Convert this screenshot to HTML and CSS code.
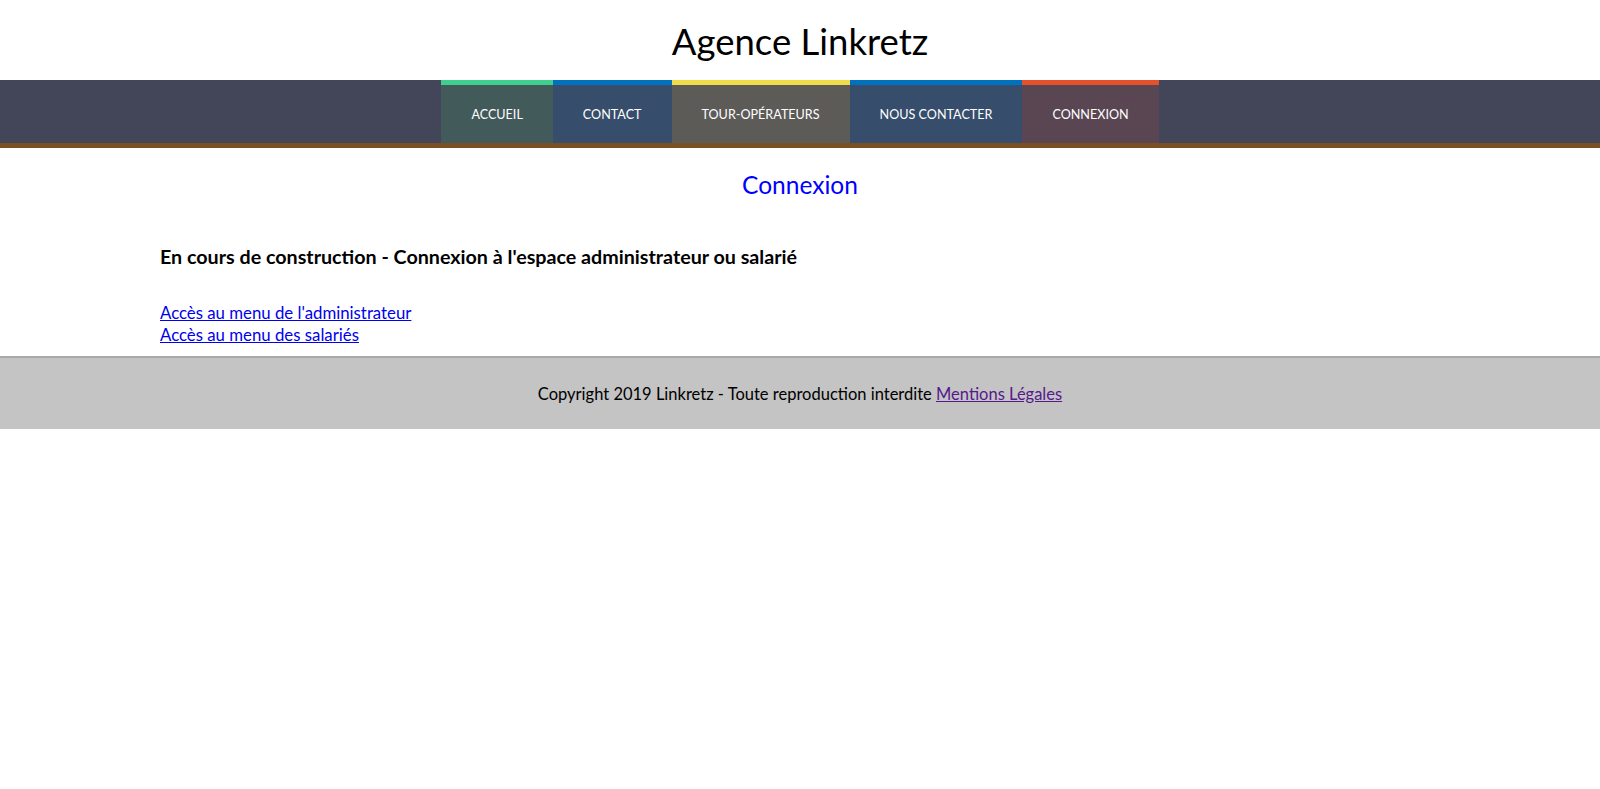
FILE: index.html
```html
<!DOCTYPE html>
<html lang="fr">
<head>
<meta charset="utf-8">
<title>Agence Linkretz - Connexion</title>
<link rel="stylesheet" href="styles.css">
</head>
<body>
<header class="site-header">
  <h1 class="site-title">Agence Linkretz</h1>
</header>
<nav class="main-nav">
  <ul class="nav-list">
    <li class="nav-item nav-accueil"><a href="#">ACCUEIL</a></li>
    <li class="nav-item nav-contact"><a href="#">CONTACT</a></li>
    <li class="nav-item nav-tour"><a href="#">TOUR-OPÉRATEURS</a></li>
    <li class="nav-item nav-nous"><a href="#">NOUS CONTACTER</a></li>
    <li class="nav-item nav-connexion"><a href="#">CONNEXION</a></li>
  </ul>
</nav>
<main class="content">
  <h2 class="page-title">Connexion</h2>
  <section class="section">
    <h3 class="section-title">En cours de construction - Connexion à l'espace administrateur ou salarié</h3>
    <p class="links">
      <a href="#" class="link">Accès au menu de l'administrateur</a><br>
      <a href="#" class="link">Accès au menu des salariés</a>
    </p>
  </section>
</main>
<footer class="site-footer">
  <p class="footer-text">Copyright 2019 Linkretz - Toute reproduction interdite <a href="#" class="visited">Mentions Légales</a></p>
</footer>
</body>
</html>
```

FILE: styles.css
```css
* { box-sizing: border-box; }
body {
  margin: 0;
  font-family: Lato, "Open Sans", sans-serif;
  color: #000;
  background: #fff;
}
.site-header {
  height: 80px;
  display: flex;
  align-items: center;
  justify-content: center;
}
.site-title {
  margin: 0;
  font-weight: 400;
  font-size: 36.5px;
  line-height: 40px;
  padding-top: 1px;
}
.main-nav {
  background: #434559;
  border-bottom: 5px solid #7a4f24;
}
.nav-list {
  list-style: none;
  margin: 0;
  padding: 0;
  display: flex;
  justify-content: center;
}
.nav-item {
  border-top: 5px solid;
}
.nav-item a {
  display: block;
  padding: 1px 30px 0;
  line-height: 57px;
  height: 58px;
  color: #fff;
  text-decoration: none;
  font-size: 12.6px;
}
.nav-accueil { border-color: #3fcf8e; background: #435a5b; }
.nav-contact { border-color: #0071bc; background: #364d6b; }
.nav-tour { border-color: #f0dc4a; background: #5d5b58; }
.nav-nous { border-color: #0071bc; background: #364d6b; }
.nav-connexion { border-color: #e5512a; background: #5a4652; }
.content {
  padding: 0 10%;
}
.page-title {
  margin: 22px 0 0;
  text-align: center;
  font-weight: 400;
  font-size: 24.5px;
  line-height: 30px;
  color: #0000ff;
}
.section-title {
  margin: 45px 0 0;
  font-size: 19.7px;
  line-height: 24px;
  font-weight: 700;
}
.links {
  margin: 33px 0 10px;
  font-size: 16.8px;
  line-height: 22px;
}
.link { color: #0000ee; }
.site-footer {
  border-top: 2px solid #a9a9a9;
  background: #c4c4c4;
  height: 73px;
  display: flex;
  align-items: center;
  justify-content: center;
}
.footer-text {
  margin: 0;
  font-size: 16.5px;
  line-height: 22px;
}
.visited { color: #551a8b; }
```
